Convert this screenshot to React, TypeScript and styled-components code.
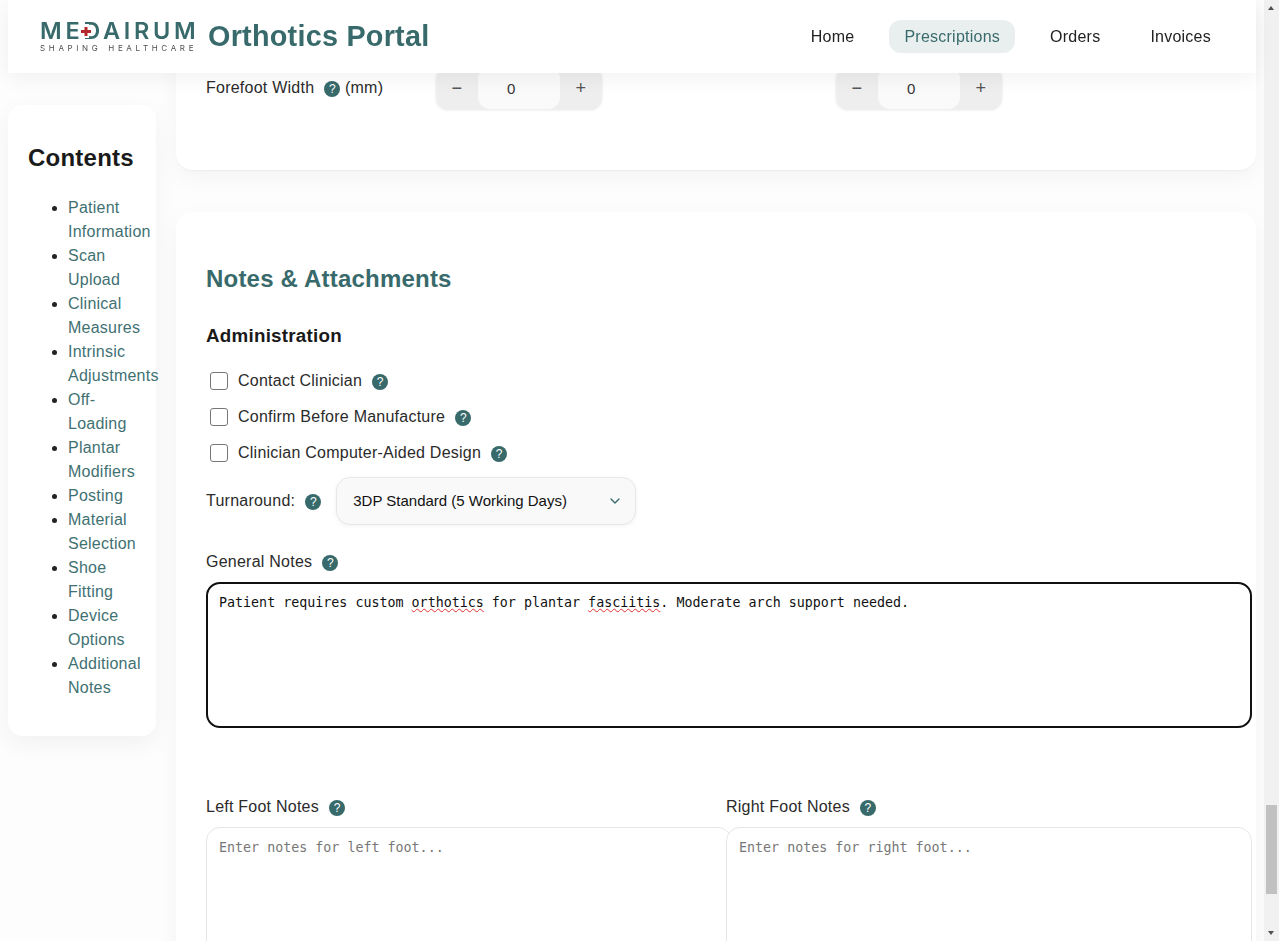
import styled, { createGlobalStyle } from "styled-components";
import { ChevronDown } from "lucide-react";

const teal = "#386a6b";

const GlobalStyle = createGlobalStyle`
  html,
  body {
    margin: 0;
    height: 100%;
    overflow: hidden;
  }

  body {
    background: #fdfdfd;
    color: #2b2b2b;
    font-family: "Liberation Sans", Arial, sans-serif;
    font-size: 16px;
    letter-spacing: 0.24px;
  }
`;

const Frame = styled.div`
  display: flex;
  height: 100vh;
  overflow: hidden;
`;

const Page = styled.div`
  flex: 1;
  min-width: 0;
  padding: 0 8px;
`;

const ScrollBar = styled.div`
  flex: 0 0 15px;
  position: relative;
  background: #f1f1f1;
`;

const ScrollArrow = styled.div<{ $down?: boolean }>`
  position: absolute;
  left: 4px;
  ${(props) => (props.$down ? "bottom: 6px;" : "top: 6px;")}
  width: 0;
  height: 0;
  border-left: 3.5px solid transparent;
  border-right: 3.5px solid transparent;
  ${(props) => (props.$down ? "border-top: 4px solid #505050;" : "border-bottom: 4px solid #505050;")}
`;

const ScrollThumb = styled.div`
  position: absolute;
  top: 805px;
  left: 2px;
  width: 11px;
  height: 89px;
  background: #c1c1c1;
`;

const Header = styled.header`
  position: sticky;
  top: 0;
  z-index: 10;
  height: 73px;
  padding: 0 30px 0 32px;
  box-sizing: border-box;

  display: flex;
  align-items: center;
  justify-content: space-between;

  background: #fff;
  box-shadow: 0 4px 20px rgba(0, 0, 0, 0.06);
`;

const Brand = styled.div`
  display: flex;
  align-items: center;
  gap: 12px;
`;

const Logo = styled.div`
  position: relative;
  width: 156px;
  color: ${teal};
  font-family: Inter, sans-serif;
  white-space: nowrap;
`;

const LogoName = styled.div`
  font-size: 23.5px;
  font-weight: 600;
  line-height: 20px;
  letter-spacing: 3.7px;
`;

const LogoCross = styled.svg`
  position: absolute;
  top: 3px;
  left: 40px;
  width: 13px;
  height: 14px;
`;

const LogoTag = styled.div`
  margin-top: 3px;
  color: #4a4f50;
  font-size: 8px;
  line-height: 8px;
  letter-spacing: 3.65px;
  word-spacing: 1px;
`;

const Title = styled.h1`
  margin: 0;
  color: ${teal};
  font-size: 28.8px;
  font-weight: 700;
`;

const Nav = styled.nav`
  display: flex;
  gap: 20px;
`;

const NavLink = styled.a<{ $active?: boolean }>`
  padding: 7px 15px;
  line-height: 19px;
  border-radius: 12px;
  color: ${(props) => (props.$active ? teal : "#222")};
  background: ${(props) => (props.$active ? "#e9efef" : "transparent")};
`;

const Layout = styled.div`
  display: flex;
  align-items: flex-start;
  gap: 20px;
  margin-top: -73px;
`;

const Sidebar = styled.aside`
  flex: 0 0 148px;
  min-width: 0;
  box-sizing: border-box;
  height: 631px;
  margin-top: 105px;
  padding: 39px 20px 0;

  background: #fff;
  border-radius: 14px;
  box-shadow: 0 8px 24px rgba(0, 0, 0, 0.05);
`;

const SidebarTitle = styled.h2`
  margin: 0 0 25px;
  color: #1a1a1a;
  font-size: 24px;
  line-height: 27px;
`;

const SidebarList = styled.ul`
  margin: 0;
  padding-left: 40px;
  line-height: 24px;
`;

const SidebarItem = styled.li`
  color: #3f7172;

  &::marker {
    color: #222;
  }
`;

const Main = styled.main`
  flex: 1;
  min-width: 0;
  display: flex;
  flex-direction: column;
  gap: 42px;
`;

const Card = styled.section`
  box-sizing: border-box;
  padding: 0 4px 0 30px;

  background: #fff;
  border-radius: 16px;
  box-shadow: 0 8px 24px rgba(0, 0, 0, 0.04), 0 1px 1px rgba(0, 0, 0, 0.04);
`;

/* the first card is scrolled up behind the header, only its last row shows */
const ScrolledCard = styled(Card)`
  height: 170px;
  display: flex;
  flex-direction: column;
  justify-content: flex-end;
  padding-bottom: 61px;
  border-radius: 0 0 16px 16px;
`;

const MeasureRow = styled.div`
  display: grid;
  grid-template-columns: 230px 400px 1fr;
  align-items: center;
`;

const MeasureLabel = styled.div`
  display: flex;
  align-items: center;
`;

const Stepper = styled.div`
  display: flex;
  width: 166px;
  height: 42px;
  border-radius: 12px;
  background: #eeeeee;
  box-shadow: 0 1px 3px rgba(0, 0, 0, 0.1);
`;

const StepButton = styled.div`
  flex: 0 0 42px;
  padding-top: 11px;
  box-sizing: border-box;
  text-align: center;
  color: #555;
  font-size: 18px;
`;

const StepValue = styled.div`
  flex: 1;
  box-sizing: border-box;
  padding: 13px 0 0 29px;
  color: #333;
  font-size: 15px;
  background: #fafafa;
  border-radius: 12px;
`;

const SectionTitle = styled.h2`
  margin: 0;
  padding-top: 52px;
  color: ${teal};
  font-size: 24px;
  line-height: 30px;
  letter-spacing: 0.2px;
`;

const GroupTitle = styled.h3`
  margin: 30px 0 0;
  color: #1a1a1a;
  font-size: 18.8px;
  line-height: 24px;
`;

const CheckList = styled.div`
  display: flex;
  flex-direction: column;
  gap: 16px;
  margin-top: 23px;
  padding-left: 4px;
`;

const CheckRow = styled.label`
  display: flex;
  align-items: center;
  height: 20px;
`;

const CheckBox = styled.input`
  appearance: none;
  width: 18px;
  height: 18px;
  margin: 0 10px 0 0;
  background: #fff;
  border: 1px solid #767676;
  border-radius: 3px;
`;

const HelpDot = styled.span`
  flex: none;
  display: inline-flex;
  align-items: center;
  justify-content: center;
  width: 16px;
  height: 16px;
  margin: 1px 0 0 10px;
  color: #fff;
  background: ${teal};
  border-radius: 50%;
  font-size: 12px;
  font-weight: 400;
  letter-spacing: 0;
`;

const Help = () => <HelpDot>?</HelpDot>;

const TurnaroundRow = styled.div`
  display: flex;
  align-items: center;
  margin-top: 14px;
`;

const SelectBox = styled.div`
  position: relative;
  margin-left: 15px;
`;

const Select = styled.select`
  appearance: none;
  display: block;
  width: 300px;
  height: 48px;
  padding: 0 16px 2px;

  color: #111;
  background: #f9f9f9;
  border: 1px solid #e8e8e8;
  border-radius: 14px;
  box-shadow: 0 1px 4px rgba(0, 0, 0, 0.06);
  font-family: "Liberation Sans", Arial, sans-serif;
  font-size: 15px;
  letter-spacing: 0;
`;

const SelectArrow = styled(ChevronDown)`
  position: absolute;
  top: 16px;
  right: 13px;
  width: 16px;
  height: 16px;
  color: ${teal};
  pointer-events: none;
`;

const NotesLabel = styled.div<{ $top: number }>`
  display: flex;
  align-items: center;
  height: 20px;
  margin-top: ${(props) => props.$top}px;
`;

const NotesBox = styled.div`
  position: relative;
  margin-top: 10px;
`;

const NotesArea = styled.textarea<{ $active?: boolean }>`
  display: block;
  box-sizing: border-box;
  width: 100%;
  height: 146px;
  padding: 12px;
  resize: none;

  color: #111;
  background: #fff;
  border: 1px solid #e6e6e6;
  border-radius: 14px;
  outline: ${(props) => (props.$active ? "2px solid #101010" : "none")};
  outline-offset: -2px;
  font-family: "DejaVu Sans Mono", monospace;
  font-size: 13.333px;
  line-height: 15.5px;
  letter-spacing: 0;

  &::placeholder {
    color: #777;
  }
`;

/* spell check marks, laid over the textarea text */
const SpellLayer = styled.div`
  position: absolute;
  top: 13px;
  left: 13px;
  color: transparent;
  font-family: "DejaVu Sans Mono", monospace;
  font-size: 13.333px;
  line-height: 15.5px;
  letter-spacing: 0;
  white-space: pre;
  pointer-events: none;
`;

const SpellWord = styled.span`
  text-decoration: underline wavy #e03030 1px;
  text-underline-offset: 1px;
`;

const FootGrid = styled.div`
  display: grid;
  grid-template-columns: 520px 526px;
  margin-top: 69px;
`;

const FootColumn = styled.div`
  position: relative;
  min-width: 0;
`;

const FootBox = styled(NotesBox)`
  width: 526px;
`;

const contents = [
  "Patient Information",
  "Scan Upload",
  "Clinical Measures",
  "Intrinsic Adjustments",
  "Off-Loading",
  "Plantar Modifiers",
  "Posting",
  "Material Selection",
  "Shoe Fitting",
  "Device Options",
  "Additional Notes",
];

const navLinks = ["Home", "Prescriptions", "Orders", "Invoices"];

const checks = [
  "Contact Clinician",
  "Confirm Before Manufacture",
  "Clinician Computer-Aided Design",
];

const generalNote =
  "Patient requires custom orthotics for plantar fasciitis. Moderate arch support needed.";

const StepperControl = () => (
  <Stepper>
    <StepButton>−</StepButton>
    <StepValue>0</StepValue>
    <StepButton>+</StepButton>
  </Stepper>
);

const App = () => {
  return (
    <Frame>
      <GlobalStyle />
      <Page>
        <Header>
          <Brand>
            <Logo>
              <LogoName>MEDAIRUM</LogoName>
              <LogoCross viewBox="0 0 13 14">
                <rect width="5" height="14" x="4" fill="#fff" />
                <path d="M4.5 3h3v3h3.500v3H7.500v3h-3V9H1V6h3.500z" fill="#b3282d" />
              </LogoCross>
              <LogoTag>SHAPING HEALTHCARE</LogoTag>
            </Logo>
            <Title>Orthotics Portal</Title>
          </Brand>
          <Nav>
            {navLinks.map((link) => (
              <NavLink key={link} $active={link === "Prescriptions"}>
                {link}
              </NavLink>
            ))}
          </Nav>
        </Header>

        <Layout>
          <Sidebar>
            <SidebarTitle>Contents</SidebarTitle>
            <SidebarList>
              {contents.map((item) => (
                <SidebarItem key={item}>{item}</SidebarItem>
              ))}
            </SidebarList>
          </Sidebar>

          <Main>
            <ScrolledCard>
              <MeasureRow>
                <MeasureLabel>
                  Forefoot Width <Help /> <span>&nbsp;(mm)</span>
                </MeasureLabel>
                <StepperControl />
                <StepperControl />
              </MeasureRow>
            </ScrolledCard>

            <Card>
              <SectionTitle>Notes &amp; Attachments</SectionTitle>
              <GroupTitle>Administration</GroupTitle>

              <CheckList>
                {checks.map((check) => (
                  <CheckRow key={check}>
                    <CheckBox type="checkbox" />
                    {check}
                    <Help />
                  </CheckRow>
                ))}
              </CheckList>

              <TurnaroundRow>
                Turnaround: <Help />
                <SelectBox>
                  <Select defaultValue="standard">
                    <option value="standard">3DP Standard (5 Working Days)</option>
                  </Select>
                  <SelectArrow />
                </SelectBox>
              </TurnaroundRow>

              <NotesLabel $top={27}>
                General Notes <Help />
              </NotesLabel>
              <NotesBox>
                <NotesArea $active spellCheck={false} defaultValue={generalNote} />
                <SpellLayer aria-hidden>
                  Patient requires custom <SpellWord>orthotics</SpellWord> for plantar{" "}
                  <SpellWord>fasciitis</SpellWord>
                </SpellLayer>
              </NotesBox>

              <FootGrid>
                <FootColumn>
                  <NotesLabel $top={0}>
                    Left Foot Notes <Help />
                  </NotesLabel>
                  <FootBox>
                    <NotesArea spellCheck={false} placeholder="Enter notes for left foot..." />
                  </FootBox>
                </FootColumn>
                <FootColumn>
                  <NotesLabel $top={0}>
                    Right Foot Notes <Help />
                  </NotesLabel>
                  <FootBox>
                    <NotesArea spellCheck={false} placeholder="Enter notes for right foot..." />
                  </FootBox>
                </FootColumn>
              </FootGrid>
            </Card>
          </Main>
        </Layout>
      </Page>
      <ScrollBar>
        <ScrollArrow />
        <ScrollThumb />
        <ScrollArrow $down />
      </ScrollBar>
    </Frame>
  );
};

export default App;
